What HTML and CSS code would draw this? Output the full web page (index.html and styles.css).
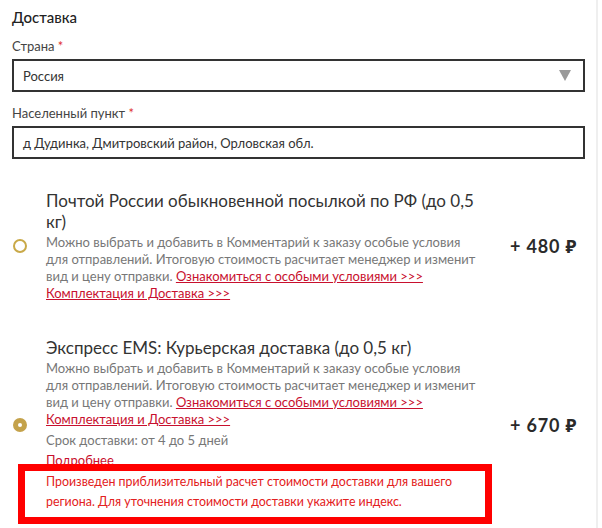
FILE: index.html
```html
<!DOCTYPE html>
<html lang="ru">
<head>
<meta charset="utf-8">
<title>Доставка</title>
<link rel="stylesheet" href="styles.css">
</head>
<body>
<div class="page">
  <section class="delivery">
    <h2 class="heading">Доставка</h2>

    <label class="label">Страна <span class="req">*</span></label>
    <div class="field select">
      <span>Россия</span>
      <span class="arrow"></span>
    </div>

    <label class="label label-second">Населенный пункт <span class="req">*</span></label>
    <div class="field">д Дудинка, Дмитровский район, Орловская обл.</div>

    <div class="options">
      <div class="option">
        <span class="radio"></span>
        <div class="content">
          <div class="title">Почтой России обыкновенной посылкой по РФ (до 0,5 кг)</div>
          <p class="desc"><span>Можно выбрать и добавить в Комментарий к заказу особые условия для отправлений. Итоговую стоимость расчитает менеджер и изменит вид и цену отправки.</span> <a class="link" href="#">Ознакомиться с особыми условиями &gt;&gt;&gt;</a></p>
          <a class="link link-block" href="#">Комплектация и Доставка &gt;&gt;&gt;</a>
        </div>
        <div class="price">+ 480 ₽</div>
      </div>

      <div class="option option-second">
        <span class="radio checked"></span>
        <div class="content">
          <div class="title">Экспресс EMS: Курьерская доставка (до 0,5 кг)</div>
          <p class="desc"><span>Можно выбрать и добавить в Комментарий к заказу особые условия для отправлений. Итоговую стоимость расчитает менеджер и изменит вид и цену отправки.</span> <a class="link" href="#">Ознакомиться с особыми условиями &gt;&gt;&gt;</a></p>
          <a class="link link-block" href="#">Комплектация и Доставка &gt;&gt;&gt;</a>
          <div class="term">Срок доставки: от 4 до 5 дней</div>
          <div class="more">Подробнее</div>
          <div class="notice">Произведен приблизительный расчет стоимости доставки для вашего региона. Для уточнения стоимости доставки укажите индекс.</div>
        </div>
        <div class="price">+ 670 ₽</div>
      </div>
    </div>
  </section>
  <div class="edge"></div>
</div>
</body>
</html>
```

FILE: styles.css
```css
*, *::before, *::after { box-sizing: border-box; }

html, body {
  margin: 0;
  padding: 0;
  background: #fff;
}

body {
  font-family: Lato, "Noto Sans", sans-serif;
  color: #333;
}

.page {
  display: flex;
  width: 602px;
  height: 528px;
  overflow: hidden;
}

.delivery {
  width: 573px;
  margin-left: 12px;
  padding-top: 7px;
}

.edge {
  width: 2px;
  margin-left: 11px;
  background: #efefef;
}

.heading {
  margin: 0;
  font-size: 15px;
  line-height: 20px;
  font-weight: 500;
  color: #222;
}

.label {
  display: block;
  margin-top: 10px;
  font-size: 13px;
  line-height: 18px;
  color: #444;
}

.label-second { margin-top: 12px; }

.req { color: #e0322f; }

.field {
  display: flex;
  align-items: center;
  justify-content: space-between;
  height: 33px;
  margin-top: 4px;
  padding: 0 12px 0 9px;
  border: 2px solid #333;
  font-size: 13px;
  color: #333;
}

.arrow {
  width: 0;
  height: 0;
  border-left: 6px solid transparent;
  border-right: 6px solid transparent;
  border-top: 11px solid #9a9a9a;
}

.options { margin-top: 31px; }

.option {
  display: grid;
  grid-template-columns: 34px 430px 1fr;
  align-items: center;
}

.option-second { margin-top: 35px; }

.radio {
  width: 14px;
  height: 14px;
  margin-left: 1px;
  border: 2px solid #c9a948;
  border-radius: 50%;
}

.radio.checked {
  background: #c4a24b;
  border-color: #c4a24b;
  position: relative;
}

.radio.checked::after {
  content: "";
  position: absolute;
  left: 3px;
  top: 3px;
  width: 4px;
  height: 4px;
  border-radius: 50%;
  background: #fff;
}

.title {
  font-size: 17px;
  line-height: 21px;
  color: #333;
}

.desc {
  margin: 2px 0 0;
  font-size: 13px;
  line-height: 17px;
  color: #777;
}

.link {
  color: #c8102e;
  text-decoration: underline;
}

.link-block {
  display: block;
  width: max-content;
  font-size: 13px;
  line-height: 17px;
}

.term {
  margin-top: 2px;
  font-size: 13px;
  line-height: 20px;
  color: #777;
}

.more {
  font-size: 13px;
  line-height: 20px;
  color: #c8102e;
}

.notice {
  position: relative;
  margin-top: 2px;
  font-size: 12.4px;
  line-height: 20px;
  color: #e32020;
}

.notice::before {
  content: "";
  position: absolute;
  left: -28px;
  top: -8px;
  width: 474px;
  bottom: -12px;
  border: 7px solid #ff0000;
}

.price {
  justify-self: end;
  margin-right: 8px;
  font-size: 18px;
  font-weight: 700;
  letter-spacing: 0.8px;
  color: #2a2a2a;
  white-space: nowrap;
}
```
